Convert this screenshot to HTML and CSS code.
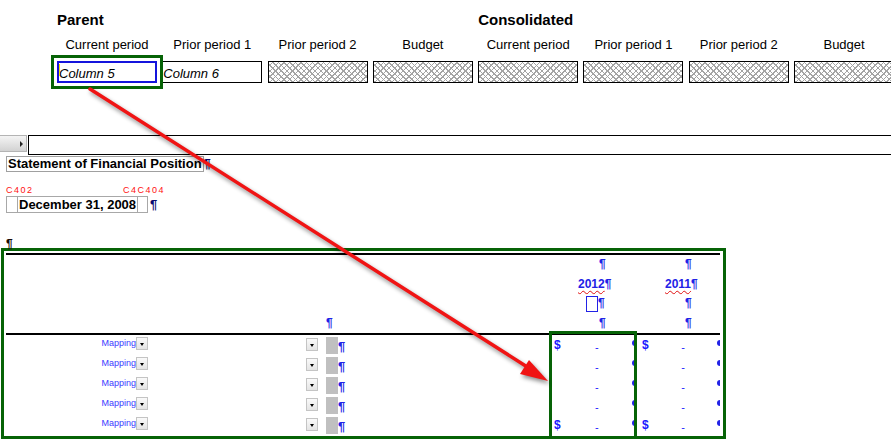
FILE: index.html
```html
<!DOCTYPE html>
<html lang="en">
<head>
  <meta charset="UTF-8">
  <title>Statement of Financial Position - column mapping</title>
  <link rel="stylesheet" href="styles.css">
</head>
<body>
  <div class="periods">
    <div class="group">Parent</div>
    <div class="group">Consolidated</div>

    <div class="head">Current period</div>
    <div class="head">Prior period 1</div>
    <div class="head">Prior period 2</div>
    <div class="head">Budget</div>
    <div class="head">Current period</div>
    <div class="head">Prior period 1</div>
    <div class="head">Prior period 2</div>
    <div class="head">Budget</div>

    <div class="cell cell-active"><span class="caret"></span>Column 5</div>
    <div class="cell">Column 6</div>
    <div class="cell hatch"></div>
    <div class="cell hatch"></div>
    <div class="cell hatch"></div>
    <div class="cell hatch"></div>
    <div class="cell hatch"></div>
    <div class="cell hatch"></div>
  </div>

  <div class="scrollrow">
    <div class="sb-btn"><span class="sb-arrow"></span></div>
    <div class="sb-track"></div>
  </div>

  <div class="title-row">
    <span class="title-box">Statement of Financial Position</span><span class="pilcrow navy">¶</span>
  </div>

  <div class="codes">
    <span class="code code-first">C402</span>
    <span class="code">C4C404</span>
  </div>

  <div class="date-row">
    <span class="date-pad"></span><span class="date-box">December 31, 2008</span><span class="date-pad date-pad-r"></span><span class="pilcrow navy">¶</span>
  </div>

  <div class="lone-mark">¶</div>

  <div class="fs">
    <div class="rule"></div>

    <div class="thead">
      <div class="th-left">
        <div class="ln"></div>
        <div class="ln"></div>
        <div class="ln"></div>
        <div class="ln mark-mid"><span class="pm">¶</span></div>
      </div>
      <div class="th-year th-a">
        <div class="ln ind-mark"><span class="pm">¶</span></div>
        <div class="ln ind-year"><span class="year">2012</span><span class="pm">¶</span></div>
        <div class="ln ind-box"><span class="blank"></span><span class="pm">¶</span></div>
        <div class="ln ind-mark"><span class="pm">¶</span></div>
      </div>
      <div class="th-year th-b">
        <div class="ln ind-mark"><span class="pm">¶</span></div>
        <div class="ln ind-year"><span class="year">2011</span><span class="pm">¶</span></div>
        <div class="ln ind-mark"><span class="pm">¶</span></div>
        <div class="ln ind-mark"><span class="pm">¶</span></div>
      </div>
    </div>

    <div class="rule"></div>

    <div class="tbody">
      <div class="row">
        <div class="desc"><span class="map">Mapping<span class="dd"></span></span><span class="dd dd-mid"></span><span class="grey"></span><span class="pm big">¶</span></div>
        <div class="amt amt-a"><span class="cur">$</span><span class="dash">-</span><span class="tail"></span></div>
        <div class="amt amt-b"><span class="cur">$</span><span class="dash">-</span><span class="tail"></span></div>
      </div>
      <div class="row">
        <div class="desc"><span class="map">Mapping<span class="dd"></span></span><span class="dd dd-mid"></span><span class="grey"></span><span class="pm big">¶</span></div>
        <div class="amt amt-a"><span class="cur"></span><span class="dash">-</span><span class="tail"></span></div>
        <div class="amt amt-b"><span class="cur"></span><span class="dash">-</span><span class="tail"></span></div>
      </div>
      <div class="row">
        <div class="desc"><span class="map">Mapping<span class="dd"></span></span><span class="dd dd-mid"></span><span class="grey"></span><span class="pm big">¶</span></div>
        <div class="amt amt-a"><span class="cur"></span><span class="dash">-</span><span class="tail"></span></div>
        <div class="amt amt-b"><span class="cur"></span><span class="dash">-</span><span class="tail"></span></div>
      </div>
      <div class="row">
        <div class="desc"><span class="map">Mapping<span class="dd"></span></span><span class="dd dd-mid"></span><span class="grey"></span><span class="pm big">¶</span></div>
        <div class="amt amt-a"><span class="cur"></span><span class="dash">-</span><span class="tail"></span></div>
        <div class="amt amt-b"><span class="cur"></span><span class="dash">-</span><span class="tail"></span></div>
      </div>
      <div class="row">
        <div class="desc"><span class="map">Mapping<span class="dd"></span></span><span class="dd dd-mid"></span><span class="grey"></span><span class="pm big">¶</span></div>
        <div class="amt amt-a"><span class="cur">$</span><span class="dash">-</span><span class="tail"></span></div>
        <div class="amt amt-b"><span class="cur">$</span><span class="dash">-</span><span class="tail"></span></div>
      </div>
    </div>

    <!-- highlight around the 2012 amounts -->
    <div class="col-highlight"></div>
  </div>

  <!-- annotation arrow from Column 5 to the 2012 column -->
  <svg class="arrow" width="891" height="439" viewBox="0 0 891 439">
    <g class="arrow-shape">
      <line x1="90" y1="89" x2="532" y2="370" stroke="#f01414" stroke-width="3.5" stroke-linecap="round"/>
      <polygon points="548,381 520,374 529,360" fill="#f01414"/>
    </g>
  </svg>
</body>
</html>
```

FILE: styles.css
```css
body {
  margin: 0;
  width: 891px;
  height: 439px;
  overflow: hidden;
  position: relative;
  font-family: "Liberation Sans", Arial, sans-serif;
  color: #000;
  background: #fff;
}

/* period columns at the top */
.periods {
  display: grid;
  grid-template-columns: repeat(8, 100px);
  column-gap: 5.3px;
  row-gap: 8px;
  padding: 11px 0 0 57px;
}

.group {
  grid-column: span 4;
  font-size: 15px;
  font-weight: bold;
  line-height: 18px;
}

.head {
  font-size: 13px;
  line-height: 16px;
  text-align: center;
  white-space: nowrap;
}

.cell {
  height: 22px;
  box-sizing: border-box;
  border: 1px solid #000;
  color: #000;
  font-size: 13px;
  font-style: italic;
  line-height: 21px;
  padding-top: 1px;
  white-space: nowrap;
}

.cell-active {
  position: relative;
  border: 2px solid #1414dc;
  line-height: 19px;
  outline: 3px solid #066306;
  outline-offset: 3px;
}

.caret {
  position: absolute;
  left: 0;
  top: 1px;
  width: 1px;
  height: 12px;
  background: #f0e000;
}

.hatch {
  background-color: #fff;
  background-image:
    repeating-linear-gradient(45deg, #a4a4a4 0 1px, transparent 1px 4px),
    repeating-linear-gradient(-45deg, #a4a4a4 0 1px, transparent 1px 4px);
}

/* horizontal scroller */
.scrollrow {
  display: flex;
  margin-top: 52px;
  height: 20px;
}

.sb-btn {
  width: 27px;
  height: 17px;
  box-sizing: border-box;
  border: 1px solid #b4b4b4;
  border-left: none;
  background: linear-gradient(#f4f4f4, #d2d2d2);
  display: flex;
  align-items: center;
  justify-content: flex-end;
  padding-right: 3px;
}

.sb-arrow {
  width: 0;
  height: 0;
  border-top: 3px solid transparent;
  border-bottom: 3px solid transparent;
  border-left: 3px solid #222;
}

.sb-track {
  flex: 1;
  margin: 0 -20px 0 1px;
  border: 1px solid #000;
}

/* statement heading */
.title-row {
  display: flex;
  align-items: center;
  margin: 1px 0 0 6px;
}

.title-box {
  border: 1px solid #a0a0a0;
  padding: 0 1px 0 1px;
  font-size: 13px;
  font-weight: bold;
  line-height: 14px;
}

.pilcrow {
  font-size: 13px;
  font-weight: bold;
  line-height: 14px;
}

.navy {
  color: #0a0a6e;
}

.codes {
  display: flex;
  margin: 13px 0 0 6px;
  height: 10px;
}

.code {
  color: #ff1010;
  font-size: 9px;
  line-height: 10px;
  letter-spacing: 1.5px;
}

.code-first {
  width: 117px;
}

.date-row {
  display: flex;
  align-items: center;
  margin: 1px 0 0 6px;
}

.date-pad {
  width: 12px;
  height: 17px;
  box-sizing: border-box;
  border: 1px solid #a8a8a8;
}

.date-pad-r {
  width: 11px;
  margin-right: 2px;
}

.date-box {
  height: 17px;
  box-sizing: border-box;
  border-top: 1px solid #a8a8a8;
  border-bottom: 1px solid #a8a8a8;
  padding: 0 1px;
  font-size: 13px;
  font-weight: bold;
  line-height: 15px;
}

.lone-mark {
  position: relative;
  z-index: 1;
  margin: 25px 0 0 6px;
  height: 10px;
  font-size: 12px;
  font-weight: bold;
  line-height: 12px;
  color: #1a0c08;
}

/* financial statement table */
.fs {
  position: relative;
  width: 725px;
  height: 191px;
  box-sizing: border-box;
  margin-left: 1px;
  border: 3px solid #066306;
  padding: 2px 3px 0 2px;
}

.rule {
  height: 2px;
  background: #000;
}

.thead,
.row {
  display: grid;
  grid-template-columns: 543px 88px 83px;
}

.thead {
  height: 78px;
}

.ln {
  height: 19.5px;
  font-size: 12px;
  font-weight: bold;
  line-height: 19.5px;
  white-space: nowrap;
}

.pm {
  color: #2222e6;
}

.mark-mid {
  padding-left: 320px;
}

.th-a .ind-mark { padding-left: 50px; }
.th-a .ind-year { padding-left: 29px; }
.th-a .ind-box { padding-left: 37px; }
.th-b .ind-mark { padding-left: 48px; }
.th-b .ind-year { padding-left: 28px; }

.year {
  color: #2222e6;
  text-decoration: underline wavy #e01010;
  text-decoration-thickness: 1px;
  text-underline-offset: 2px;
}

.blank {
  display: inline-block;
  width: 12px;
  height: 16px;
  box-sizing: border-box;
  border: 1px solid #2222e6;
  vertical-align: -5px;
}

.tbody {
  height: 100px;
}

.row {
  height: 20px;
}

.desc {
  display: flex;
  align-items: flex-start;
}

.map {
  width: 142px;
  display: flex;
  justify-content: flex-end;
  align-items: flex-start;
  color: #3a3aff;
  font-size: 9px;
  line-height: 10px;
  padding-top: 3px;
}

.dd {
  position: relative;
  width: 12px;
  height: 13px;
  box-sizing: border-box;
  border: 1px solid #c4c4c4;
  background: linear-gradient(#fafafa, #e4e4e4);
  margin-top: -1px;
}

.dd::after {
  content: "";
  position: absolute;
  left: 3px;
  top: 5px;
  border-left: 2.5px solid transparent;
  border-right: 2.5px solid transparent;
  border-top: 3px solid #000;
}

.dd-mid {
  margin: 3px 0 0 158px;
}

.grey {
  width: 12px;
  height: 17px;
  margin: 2px 0 0 8px;
  background: #c0c0c0;
}

.big {
  font-size: 13px;
  font-weight: bold;
  line-height: 15px;
  margin-top: 4px;
}

.amt {
  display: flex;
  align-items: flex-start;
  color: #1a1aff;
  padding-left: 5px;
}

.cur {
  width: 41px;
  font-size: 12px;
  font-weight: bold;
  line-height: 14px;
  margin-top: 3px;
}

.dash {
  width: 4px;
  font-size: 11px;
  line-height: 14px;
  margin-top: 5px;
}

.amt-a .tail {
  margin-left: 33px;
}

.amt-b .cur {
  width: 40px;
}

.amt-b .tail {
  margin-left: 32px;
}

.tail {
  width: 3px;
  height: 6px;
  margin-top: 5px;
  border-radius: 3px 0 0 3px;
  background: #2222e6;
}

.col-highlight {
  position: absolute;
  left: 545px;
  top: 80px;
  width: 88px;
  height: 108px;
  box-sizing: border-box;
  border: 3px solid #066306;
}

/* red annotation arrow */
.arrow {
  position: absolute;
  left: 0;
  top: 0;
  pointer-events: none;
}

.arrow-shape {
  filter: drop-shadow(2px 3px 2px rgba(0, 0, 0, 0.45));
}
```
